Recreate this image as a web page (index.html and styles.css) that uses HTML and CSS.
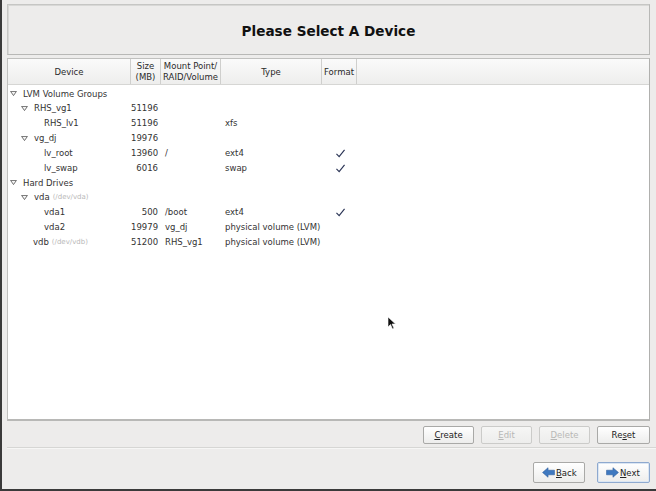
FILE: index.html
```html
<!DOCTYPE html>
<html>
<head>
<meta charset="utf-8">
<link rel="stylesheet" href="styles.css">
</head>
<body>
<div class="screen">
  <div class="banner"><h1>Please Select A Device</h1></div>
  <div class="panel">
    <div class="thead">
      <div class="th c-dev">Device</div>
      <div class="th c-size">Size<br>(MB)</div>
      <div class="th c-mnt">Mount Point/<br>RAID/Volume</div>
      <div class="th c-type">Type</div>
      <div class="th c-fmt">Format</div>
      <div class="th c-rest"></div>
    </div>
    <div class="tbody">
      <div class="row"><div class="dev l0"><svg class="tri" viewBox="0 0 8 6"><polygon points="0.5,0.5 7.5,0.5 4,5.5"/></svg>LVM Volume Groups</div><div class="size"></div><div class="mnt"></div><div class="type"></div><div class="fmt"></div></div>
      <div class="row"><div class="dev l1"><svg class="tri" viewBox="0 0 8 6"><polygon points="0.5,0.5 7.5,0.5 4,5.5"/></svg>RHS_vg1</div><div class="size">51196</div><div class="mnt"></div><div class="type"></div><div class="fmt"></div></div>
      <div class="row"><div class="dev l2">RHS_lv1</div><div class="size">51196</div><div class="mnt"></div><div class="type">xfs</div><div class="fmt"></div></div>
      <div class="row"><div class="dev l1"><svg class="tri" viewBox="0 0 8 6"><polygon points="0.5,0.5 7.5,0.5 4,5.5"/></svg>vg_dj</div><div class="size">19976</div><div class="mnt"></div><div class="type"></div><div class="fmt"></div></div>
      <div class="row"><div class="dev l2">lv_root</div><div class="size">13960</div><div class="mnt">/</div><div class="type">ext4</div><div class="fmt"><svg class="chk" viewBox="0 0 12 10"><path d="M1.5 5.5 L4.5 8.5 L10.5 1"/></svg></div></div>
      <div class="row"><div class="dev l2">lv_swap</div><div class="size">6016</div><div class="mnt"></div><div class="type">swap</div><div class="fmt"><svg class="chk" viewBox="0 0 12 10"><path d="M1.5 5.5 L4.5 8.5 L10.5 1"/></svg></div></div>
      <div class="row"><div class="dev l0"><svg class="tri" viewBox="0 0 8 6"><polygon points="0.5,0.5 7.5,0.5 4,5.5"/></svg>Hard Drives</div><div class="size"></div><div class="mnt"></div><div class="type"></div><div class="fmt"></div></div>
      <div class="row"><div class="dev l1"><svg class="tri" viewBox="0 0 8 6"><polygon points="0.5,0.5 7.5,0.5 4,5.5"/></svg>vda <span class="path">(/dev/vda)</span></div><div class="size"></div><div class="mnt"></div><div class="type"></div><div class="fmt"></div></div>
      <div class="row"><div class="dev l2">vda1</div><div class="size">500</div><div class="mnt">/boot</div><div class="type">ext4</div><div class="fmt"><svg class="chk" viewBox="0 0 12 10"><path d="M1.5 5.5 L4.5 8.5 L10.5 1"/></svg></div></div>
      <div class="row"><div class="dev l2">vda2</div><div class="size">19979</div><div class="mnt">vg_dj</div><div class="type">physical volume (LVM)</div><div class="fmt"></div></div>
      <div class="row"><div class="dev l1b">vdb <span class="path">(/dev/vdb)</span></div><div class="size">51200</div><div class="mnt">RHS_vg1</div><div class="type">physical volume (LVM)</div><div class="fmt"></div></div>
    </div>
  </div>
  <div class="actions">
    <button class="btn"><u>C</u>reate</button>
    <button class="btn disabled"><u>E</u>dit</button>
    <button class="btn disabled"><u>D</u>elete</button>
    <button class="btn">Re<u>s</u>et</button>
  </div>
  <div class="sep"></div>
  <div class="nav">
    <button class="btn navbtn"><svg class="arrow" viewBox="0 0 14 12"><path d="M0.5 6 L6.5 0.8 L6.5 3.5 L13.5 3.5 L13.5 8.5 L6.5 8.5 L6.5 11.2 Z"/></svg><u>B</u>ack</button>
    <button class="btn navbtn focus"><svg class="arrow" viewBox="0 0 14 12"><path d="M13.5 6 L7.5 0.8 L7.5 3.5 L0.5 3.5 L0.5 8.5 L7.5 8.5 L7.5 11.2 Z"/></svg><u>N</u>ext</button>
  </div>
  <svg class="cursor" viewBox="0 0 10 14"><path d="M1 1 L1 11 L3.5 8.5 L5.5 13 L7 12.3 L5 8 L8.5 8 Z"/></svg>
</div>
</body>
</html>
```
FILE: styles.css
```css
html, body {
  margin: 0;
  padding: 0;
}
body {
  background: #edeceb;
  font-family: "DejaVu Sans", "Liberation Sans", sans-serif;
  color: #222;
}
.screen {
  position: relative;
  width: 656px;
  height: 491px;
  box-sizing: border-box;
  border-left: 2px solid #3a3a3a;
  border-bottom: 2px solid #3a3a3a;
  padding: 4px 6px 0 5px;
  display: flex;
  flex-direction: column;
}
.banner {
  height: 51px;
  box-sizing: border-box;
  border: 1px solid #c6c6c4;
  border-right-color: #b8b8b6;
  border-bottom-color: #b8b8b6;
  box-shadow: inset 1px 1px 0 #d8d8d6;
  display: flex;
  align-items: center;
  justify-content: center;
}
.banner h1 {
  margin: 0;
  font-size: 13.6px;
  font-weight: bold;
  color: #111;
  padding-top: 2px;
}
.panel {
  margin-top: 3px;
  height: 363px;
  box-sizing: border-box;
  background: #fff;
  border: 1px solid #c0c0be;
  border-right-color: #b0b0ae;
  border-bottom: 2px solid #b8b8b6;
  font-size: 8.5px;
}
.thead {
  display: flex;
  height: 26px;
  box-sizing: border-box;
  border-bottom: 1px solid #d6d6d4;
  background: linear-gradient(#fafafa, #eeeeed);
}
.th {
  box-sizing: border-box;
  border-right: 1px solid #cfcfcd;
  display: flex;
  align-items: center;
  justify-content: center;
  text-align: center;
  line-height: 11px;
  color: #2a2a2a;
  padding-top: 1px;
}
.c-dev { width: 123px; }
.c-size { width: 30px; }
.c-mnt { width: 60px; }
.c-type { width: 101px; }
.c-fmt { width: 35px; }
.c-rest { flex: 1; border-right: none; }
.tbody {
  padding-top: 1.5px;
}
.row {
  display: flex;
  height: 14.85px;
  line-height: 14.85px;
  color: #333;
  white-space: nowrap;
}
.dev {
  width: 123px;
  box-sizing: border-box;
  display: flex;
  align-items: center;
}
.l0 { padding-left: 2px; }
.l1 { padding-left: 13px; }
.l1b { padding-left: 25px; }
.l2 { padding-left: 36px; }
.tri {
  width: 7px;
  height: 5px;
  margin-right: 6px;
  fill: #f4f4f4;
  stroke: #555;
  stroke-width: 1;
}
.path {
  color: #b8b8b8;
  font-size: 7px;
  margin-left: 3px;
}
.size {
  width: 30px;
  text-align: right;
  box-sizing: border-box;
  padding-right: 3px;
}
.mnt {
  width: 60px;
  box-sizing: border-box;
  padding-left: 4px;
}
.type {
  width: 101px;
  box-sizing: border-box;
  padding-left: 4px;
}
.fmt {
  width: 35px;
  display: flex;
  align-items: center;
  justify-content: center;
}
.chk {
  width: 11px;
  height: 9px;
  fill: none;
  stroke: #2b3556;
  stroke-width: 1.3;
  margin-left: 2px;
}
.actions {
  margin-top: 5px;
  display: flex;
  justify-content: flex-end;
  gap: 7px;
}
.btn {
  font-family: "DejaVu Sans", "Liberation Sans", sans-serif;
  font-size: 8.5px;
  color: #222;
  height: 18px;
  width: 51px;
  padding: 0;
  box-sizing: border-box;
  border: 1px solid #a9a9a7;
  border-radius: 2px;
  background: linear-gradient(#ffffff, #ededec);
  display: flex;
  align-items: center;
  justify-content: center;
}
.btn u {
  text-decoration-thickness: 1px;
  text-underline-offset: 1px;
}
.actions .btn:nth-child(4) { width: 53px; }
.btn.disabled {
  color: #b8b8b6;
  border-color: #cbcbc9;
  background: linear-gradient(#f6f6f5, #ededec);
}
.sep {
  margin-top: 3px;
  height: 1px;
  background: #d6d6d4;
  border-bottom: 1px solid #f6f6f5;
  margin-right: -6px;
}
.nav {
  margin-top: 13px;
  display: flex;
  justify-content: flex-end;
  gap: 12px;
}
.navbtn {
  height: 21px;
  width: 52px;
  justify-content: flex-start;
  padding-left: 8px;
}
.navbtn.focus {
  border-color: #8ea9cf;
  box-shadow: inset 0 0 0 1px #dbe6f3;
  width: 53px;
}
.arrow {
  width: 13px;
  height: 11px;
  fill: #3f79c0;
  stroke: #2a5a9a;
  stroke-width: 0.6;
  margin-right: 1px;
}
.cursor {
  position: absolute;
  left: 385px;
  top: 316px;
  width: 10px;
  height: 14px;
  fill: #111;
  stroke: #fff;
  stroke-width: 0.6;
}
```
